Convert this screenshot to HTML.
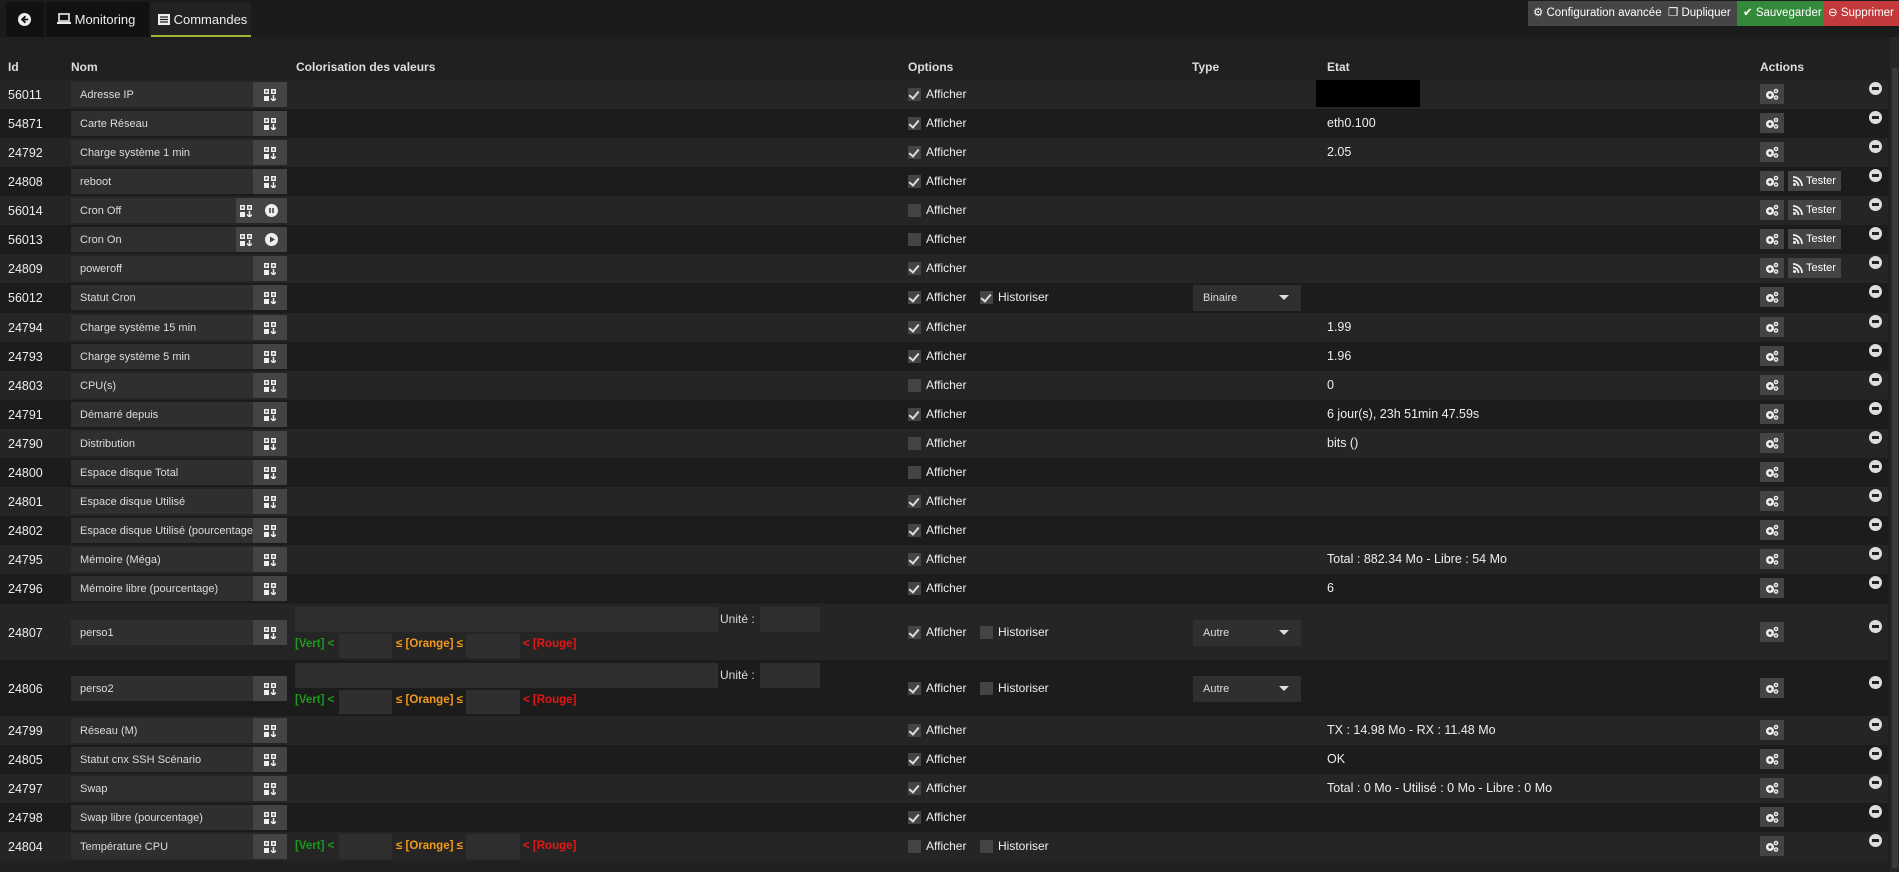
<!DOCTYPE html>
<html><head><meta charset="utf-8">
<style>
*{box-sizing:border-box;margin:0;padding:0}
body{width:1899px;height:872px;background:#1b1b1b;font-family:"Liberation Sans",sans-serif;color:#e6e6e6;overflow:hidden;position:relative}
.top{position:absolute;left:0;top:0;width:1899px;height:37px;background:#1b1b1b;z-index:2}
.tab{position:absolute;top:2px;height:35px;line-height:35px;font-size:13px;color:#eee;white-space:nowrap}
.btn{position:absolute;top:1px;height:25px;line-height:25px;font-size:11.5px;color:#fff;padding-left:6px;white-space:nowrap}
.panel{position:absolute;left:0;top:37px;width:1890px;height:835px;background:#202020}
.h{position:absolute;top:60px;font-size:12px;font-weight:bold;color:#ddd}
.r{position:absolute;left:0;width:1888px;height:29px;font-size:12px}
.a{background:#252525}.b{background:#1c1c1c}
.r>*{position:absolute}
.id{left:8px;top:8px;font-size:12.5px;color:#eee}
.nm{left:71px;top:2px;width:182px;height:25px;background:#2f2f2f;font-size:11px;line-height:27px;padding-left:9px;color:#ddd;white-space:nowrap;overflow:hidden}
.nb{left:253px;top:2px;width:34px;height:25px;background:#444}
.nb svg,.nb2 svg{position:absolute;left:11px;top:7px}
.nb2{left:236px;top:2px;width:51px;height:25px;background:#444}
.nb2 svg{left:4px}
.pl{position:absolute;left:29px;top:6px;width:13px;height:13px;border-radius:50%;background:#eee}
.cb{top:8px;width:13px;height:13px;background:#444}
.cb.on::after{content:"";position:absolute;left:3px;top:1px;width:4px;height:8px;border:solid #ddd;border-width:0 2px 2px 0;transform:rotate(40deg)}
.lb{top:7px;font-size:12px;color:#eee}
.et{left:1327px;top:7px;font-size:12.5px;color:#eee}
.gb{left:1760px;top:4px;width:24px;height:20px;background:#444}
.gb svg{position:absolute;left:5px;top:4px}
.ts{left:1788px;top:4px;width:53px;height:20px;background:#444;font-size:11px;color:#fff;line-height:20px;padding-left:18px}
.ts svg{position:absolute;left:5px;top:5px}
.mi{left:1869px;top:2px;width:13px;height:13px;border-radius:50%;background:#ddd}
.mi::after{content:"";position:absolute;left:3px;top:5px;width:7px;height:3px;background:#222}
.sel{left:1193px;top:2px;width:108px;height:26px;background:#2f2f2f;font-size:11px;line-height:26px;padding-left:10px;color:#ddd}
.sel::after{content:"";position:absolute;right:12px;top:10px;border:5px solid transparent;border-top-color:#ddd}
.inp{background:#2f2f2f}
.g{color:#1b9a1b;font-weight:bold;font-size:11.5px}.o{color:#f29a1b;font-weight:bold;font-size:11.5px}.rd{color:#e01818;font-weight:bold;font-size:11.5px}
</style></head><body>
<div class="top">
 <div class="tab" style="left:6px;width:38px;background:#111"><svg width="13" height="13" viewBox="0 0 14 14" style="position:absolute;left:12px;top:11px"><circle cx="7" cy="7" r="7" fill="#eee"/><path d="M8 3.5 4.5 7 8 10.5M4.5 7H11" stroke="#111" stroke-width="2" fill="none"/></svg></div>
 <div class="tab" style="left:46px;width:103px;background:#111;padding-left:11px"><svg width="14" height="12" viewBox="0 0 14 12" style="vertical-align:-1px"><rect x="2" y="1" width="10" height="7" fill="none" stroke="#eee" stroke-width="1.6"/><rect x="0" y="9" width="14" height="2" fill="#eee"/></svg> Monitoring</div>
 <div class="tab" style="left:151px;width:100px;background:#222;padding-left:7px;border-bottom:2px solid #9ab833"><svg width="12" height="11" viewBox="0 0 12 11" style="vertical-align:-1px"><rect width="12" height="11" fill="#eee"/><path d="M2 3h8M2 5.5h8M2 8h8" stroke="#222" stroke-width="1.2"/></svg> Commandes</div>
 <div class="btn" style="left:1528px;width:209px;background:#454545;padding-left:5px">⚙ Configuration avancée &nbsp;❐ Dupliquer</div>
 <div class="btn" style="left:1737px;width:87px;background:#35893a">✔ Sauvegarder</div>
 <div class="btn" style="left:1824px;width:75px;background:#c43a3c;padding-left:4px">⊖ Supprimer</div>
</div>
<div class="panel"></div>
<div style="position:absolute;left:1890px;top:37px;width:9px;height:835px;background:#262626"></div>
<div style="position:absolute;left:1892px;top:68px;width:6px;height:800px;background:#3a3a3a"></div>
<div class="h" style="left:8px">Id</div><div class="h" style="left:71px">Nom</div><div class="h" style="left:296px">Colorisation des valeurs</div><div class="h" style="left:908px">Options</div><div class="h" style="left:1192px">Type</div><div class="h" style="left:1327px">Etat</div><div class="h" style="left:1760px">Actions</div>

<svg width="0" height="0" style="position:absolute"><defs>
<symbol id="ci" viewBox="0 0 12 12"><rect x="0" y="0" width="5" height="5" fill="#eee"/><rect x="7" y="0" width="5" height="5" fill="#eee"/><rect x="0" y="7" width="5" height="5" fill="#eee"/><path d="M9.5 6v6M7 9.5l2.5 2.5 2.5-2.5" stroke="#eee" stroke-width="1.5" fill="none"/><rect x="1.5" y="1.5" width="2" height="2" fill="#444"/><rect x="8.5" y="1.5" width="2" height="2" fill="#444"/></symbol>
<symbol id="gr" viewBox="0 0 14 12"><circle cx="5" cy="7" r="4" fill="#eee"/><circle cx="5" cy="7" r="1.5" fill="#444"/><circle cx="11" cy="3" r="2.3" fill="#eee"/><circle cx="11" cy="3" r="0.9" fill="#444"/><circle cx="11" cy="9.5" r="2.3" fill="#eee"/><circle cx="11" cy="9.5" r="0.9" fill="#444"/></symbol>
<symbol id="rs" viewBox="0 0 10 10"><circle cx="1.5" cy="8.5" r="1.5" fill="#eee"/><path d="M0 4.5a5.5 5.5 0 0 1 5.5 5.5M0 1a9 9 0 0 1 9 9" stroke="#eee" stroke-width="1.8" fill="none"/></symbol>
</defs></svg>

<div class="r a" style="top:80px"><span class="id">56011</span><div class="nm">Adresse IP</div><div class="nb"><svg width="12" height="12"><use href="#ci"/></svg></div><span class="cb on" style="left:908px"></span><span class="lb" style="left:926px">Afficher</span><div style="left:1316px;top:0;width:104px;height:27px;background:#000"></div><div class="gb"><svg width="14" height="12"><use href="#gr"/></svg></div><div class="mi"></div></div>
<div class="r b" style="top:109px"><span class="id">54871</span><div class="nm">Carte Réseau</div><div class="nb"><svg width="12" height="12"><use href="#ci"/></svg></div><span class="cb on" style="left:908px"></span><span class="lb" style="left:926px">Afficher</span><span class="et">eth0.100</span><div class="gb"><svg width="14" height="12"><use href="#gr"/></svg></div><div class="mi"></div></div>
<div class="r a" style="top:138px"><span class="id">24792</span><div class="nm">Charge système 1 min</div><div class="nb"><svg width="12" height="12"><use href="#ci"/></svg></div><span class="cb on" style="left:908px"></span><span class="lb" style="left:926px">Afficher</span><span class="et">2.05</span><div class="gb"><svg width="14" height="12"><use href="#gr"/></svg></div><div class="mi"></div></div>
<div class="r b" style="top:167px"><span class="id">24808</span><div class="nm">reboot</div><div class="nb"><svg width="12" height="12"><use href="#ci"/></svg></div><span class="cb on" style="left:908px"></span><span class="lb" style="left:926px">Afficher</span><div class="gb"><svg width="14" height="12"><use href="#gr"/></svg></div><div class="ts"><svg width="10" height="10"><use href="#rs"/></svg>Tester</div><div class="mi"></div></div>
<div class="r a" style="top:196px"><span class="id">56014</span><div class="nm" style="width:165px">Cron Off</div><div class="nb2"><svg width="12" height="12"><use href="#ci"/></svg><span class="pl"><svg width="13" height="13" style="left:0;top:0"><path d="M5 4v5M8 4v5" stroke="#444" stroke-width="1.6"/></svg></span></div><span class="cb" style="left:908px"></span><span class="lb" style="left:926px">Afficher</span><div class="gb"><svg width="14" height="12"><use href="#gr"/></svg></div><div class="ts"><svg width="10" height="10"><use href="#rs"/></svg>Tester</div><div class="mi"></div></div>
<div class="r b" style="top:225px"><span class="id">56013</span><div class="nm" style="width:165px">Cron On</div><div class="nb2"><svg width="12" height="12"><use href="#ci"/></svg><span class="pl"><svg width="13" height="13" style="left:0;top:0"><path d="M5 3.5v6l5-3z" fill="#444"/></svg></span></div><span class="cb" style="left:908px"></span><span class="lb" style="left:926px">Afficher</span><div class="gb"><svg width="14" height="12"><use href="#gr"/></svg></div><div class="ts"><svg width="10" height="10"><use href="#rs"/></svg>Tester</div><div class="mi"></div></div>
<div class="r a" style="top:254px"><span class="id">24809</span><div class="nm">poweroff</div><div class="nb"><svg width="12" height="12"><use href="#ci"/></svg></div><span class="cb on" style="left:908px"></span><span class="lb" style="left:926px">Afficher</span><div class="gb"><svg width="14" height="12"><use href="#gr"/></svg></div><div class="ts"><svg width="10" height="10"><use href="#rs"/></svg>Tester</div><div class="mi"></div></div>
<div class="r b" style="top:283px;height:30px"><span class="id">56012</span><div class="nm">Statut Cron</div><div class="nb"><svg width="12" height="12"><use href="#ci"/></svg></div><span class="cb on" style="left:908px"></span><span class="lb" style="left:926px">Afficher</span><span class="cb on" style="left:980px"></span><span class="lb" style="left:998px">Historiser</span><div class="sel">Binaire</div><div class="gb"><svg width="14" height="12"><use href="#gr"/></svg></div><div class="mi"></div></div>
<div class="r a" style="top:313px"><span class="id">24794</span><div class="nm">Charge système 15 min</div><div class="nb"><svg width="12" height="12"><use href="#ci"/></svg></div><span class="cb on" style="left:908px"></span><span class="lb" style="left:926px">Afficher</span><span class="et">1.99</span><div class="gb"><svg width="14" height="12"><use href="#gr"/></svg></div><div class="mi"></div></div>
<div class="r b" style="top:342px"><span class="id">24793</span><div class="nm">Charge système 5 min</div><div class="nb"><svg width="12" height="12"><use href="#ci"/></svg></div><span class="cb on" style="left:908px"></span><span class="lb" style="left:926px">Afficher</span><span class="et">1.96</span><div class="gb"><svg width="14" height="12"><use href="#gr"/></svg></div><div class="mi"></div></div>
<div class="r a" style="top:371px"><span class="id">24803</span><div class="nm">CPU(s)</div><div class="nb"><svg width="12" height="12"><use href="#ci"/></svg></div><span class="cb" style="left:908px"></span><span class="lb" style="left:926px">Afficher</span><span class="et">0</span><div class="gb"><svg width="14" height="12"><use href="#gr"/></svg></div><div class="mi"></div></div>
<div class="r b" style="top:400px"><span class="id">24791</span><div class="nm">Démarré depuis</div><div class="nb"><svg width="12" height="12"><use href="#ci"/></svg></div><span class="cb on" style="left:908px"></span><span class="lb" style="left:926px">Afficher</span><span class="et">6 jour(s), 23h 51min 47.59s</span><div class="gb"><svg width="14" height="12"><use href="#gr"/></svg></div><div class="mi"></div></div>
<div class="r a" style="top:429px"><span class="id">24790</span><div class="nm">Distribution</div><div class="nb"><svg width="12" height="12"><use href="#ci"/></svg></div><span class="cb" style="left:908px"></span><span class="lb" style="left:926px">Afficher</span><span class="et">bits ()</span><div class="gb"><svg width="14" height="12"><use href="#gr"/></svg></div><div class="mi"></div></div>
<div class="r b" style="top:458px"><span class="id">24800</span><div class="nm">Espace disque Total</div><div class="nb"><svg width="12" height="12"><use href="#ci"/></svg></div><span class="cb" style="left:908px"></span><span class="lb" style="left:926px">Afficher</span><div class="gb"><svg width="14" height="12"><use href="#gr"/></svg></div><div class="mi"></div></div>
<div class="r a" style="top:487px"><span class="id">24801</span><div class="nm">Espace disque Utilisé</div><div class="nb"><svg width="12" height="12"><use href="#ci"/></svg></div><span class="cb on" style="left:908px"></span><span class="lb" style="left:926px">Afficher</span><div class="gb"><svg width="14" height="12"><use href="#gr"/></svg></div><div class="mi"></div></div>
<div class="r b" style="top:516px"><span class="id">24802</span><div class="nm">Espace disque Utilisé (pourcentage)</div><div class="nb"><svg width="12" height="12"><use href="#ci"/></svg></div><span class="cb on" style="left:908px"></span><span class="lb" style="left:926px">Afficher</span><div class="gb"><svg width="14" height="12"><use href="#gr"/></svg></div><div class="mi"></div></div>
<div class="r a" style="top:545px"><span class="id">24795</span><div class="nm">Mémoire (Méga)</div><div class="nb"><svg width="12" height="12"><use href="#ci"/></svg></div><span class="cb on" style="left:908px"></span><span class="lb" style="left:926px">Afficher</span><span class="et">Total : 882.34 Mo - Libre : 54 Mo</span><div class="gb"><svg width="14" height="12"><use href="#gr"/></svg></div><div class="mi"></div></div>
<div class="r b" style="top:574px"><span class="id">24796</span><div class="nm">Mémoire libre (pourcentage)</div><div class="nb"><svg width="12" height="12"><use href="#ci"/></svg></div><span class="cb on" style="left:908px"></span><span class="lb" style="left:926px">Afficher</span><span class="et">6</span><div class="gb"><svg width="14" height="12"><use href="#gr"/></svg></div><div class="mi"></div></div>

<div class="r a" style="top:604px;height:56px"><span class="id" style="top:22px">24807</span><div class="nm" style="top:16px">perso1</div><div class="nb" style="top:16px"><svg width="12" height="12"><use href="#ci"/></svg></div>
<div class="inp" style="left:295px;top:3px;width:423px;height:25px"></div><span class="lb" style="left:720px;top:8px;color:#ddd">Unité :</span><div class="inp" style="left:760px;top:3px;width:60px;height:25px"></div>
<span class="g" style="left:295px;top:34px">[Vert] &lt;</span><div class="inp" style="left:339px;top:30px;width:53px;height:24px"></div><span class="o" style="left:396px;top:34px">≤ [Orange] ≤</span><div class="inp" style="left:466px;top:30px;width:54px;height:24px"></div><span class="rd" style="left:523px;top:34px">&lt; [Rouge]</span>
<span class="cb on" style="left:908px;top:22px"></span><span class="lb" style="left:926px;top:21px">Afficher</span><span class="cb" style="left:980px;top:22px"></span><span class="lb" style="left:998px;top:21px">Historiser</span><div class="sel" style="top:16px">Autre</div><div class="gb" style="top:18px"><svg width="14" height="12"><use href="#gr"/></svg></div><div class="mi" style="top:16px"></div></div>

<div class="r b" style="top:660px;height:56px"><span class="id" style="top:22px">24806</span><div class="nm" style="top:16px">perso2</div><div class="nb" style="top:16px"><svg width="12" height="12"><use href="#ci"/></svg></div>
<div class="inp" style="left:295px;top:3px;width:423px;height:25px"></div><span class="lb" style="left:720px;top:8px;color:#ddd">Unité :</span><div class="inp" style="left:760px;top:3px;width:60px;height:25px"></div>
<span class="g" style="left:295px;top:34px">[Vert] &lt;</span><div class="inp" style="left:339px;top:30px;width:53px;height:24px"></div><span class="o" style="left:396px;top:34px">≤ [Orange] ≤</span><div class="inp" style="left:466px;top:30px;width:54px;height:24px"></div><span class="rd" style="left:523px;top:34px">&lt; [Rouge]</span>
<span class="cb on" style="left:908px;top:22px"></span><span class="lb" style="left:926px;top:21px">Afficher</span><span class="cb" style="left:980px;top:22px"></span><span class="lb" style="left:998px;top:21px">Historiser</span><div class="sel" style="top:16px">Autre</div><div class="gb" style="top:18px"><svg width="14" height="12"><use href="#gr"/></svg></div><div class="mi" style="top:16px"></div></div>

<div class="r a" style="top:716px"><span class="id">24799</span><div class="nm">Réseau (M)</div><div class="nb"><svg width="12" height="12"><use href="#ci"/></svg></div><span class="cb on" style="left:908px"></span><span class="lb" style="left:926px">Afficher</span><span class="et">TX : 14.98 Mo - RX : 11.48 Mo</span><div class="gb"><svg width="14" height="12"><use href="#gr"/></svg></div><div class="mi"></div></div>
<div class="r b" style="top:745px"><span class="id">24805</span><div class="nm">Statut cnx SSH Scénario</div><div class="nb"><svg width="12" height="12"><use href="#ci"/></svg></div><span class="cb on" style="left:908px"></span><span class="lb" style="left:926px">Afficher</span><span class="et">OK</span><div class="gb"><svg width="14" height="12"><use href="#gr"/></svg></div><div class="mi"></div></div>
<div class="r a" style="top:774px"><span class="id">24797</span><div class="nm">Swap</div><div class="nb"><svg width="12" height="12"><use href="#ci"/></svg></div><span class="cb on" style="left:908px"></span><span class="lb" style="left:926px">Afficher</span><span class="et">Total : 0 Mo - Utilisé : 0 Mo - Libre : 0 Mo</span><div class="gb"><svg width="14" height="12"><use href="#gr"/></svg></div><div class="mi"></div></div>
<div class="r b" style="top:803px"><span class="id">24798</span><div class="nm">Swap libre (pourcentage)</div><div class="nb"><svg width="12" height="12"><use href="#ci"/></svg></div><span class="cb on" style="left:908px"></span><span class="lb" style="left:926px">Afficher</span><div class="gb"><svg width="14" height="12"><use href="#gr"/></svg></div><div class="mi"></div></div>
<div class="r a" style="top:832px"><span class="id">24804</span><div class="nm">Température CPU</div><div class="nb"><svg width="12" height="12"><use href="#ci"/></svg></div><span class="g" style="left:295px;top:8px">[Vert] &lt;</span><div class="inp" style="left:339px;top:2px;width:53px;height:25px"></div><span class="o" style="left:396px;top:8px">≤ [Orange] ≤</span><div class="inp" style="left:466px;top:2px;width:54px;height:25px"></div><span class="rd" style="left:523px;top:8px">&lt; [Rouge]</span><span class="cb" style="left:908px"></span><span class="lb" style="left:926px">Afficher</span><span class="cb" style="left:980px"></span><span class="lb" style="left:998px">Historiser</span><div class="gb"><svg width="14" height="12"><use href="#gr"/></svg></div><div class="mi"></div></div>
</body></html>
